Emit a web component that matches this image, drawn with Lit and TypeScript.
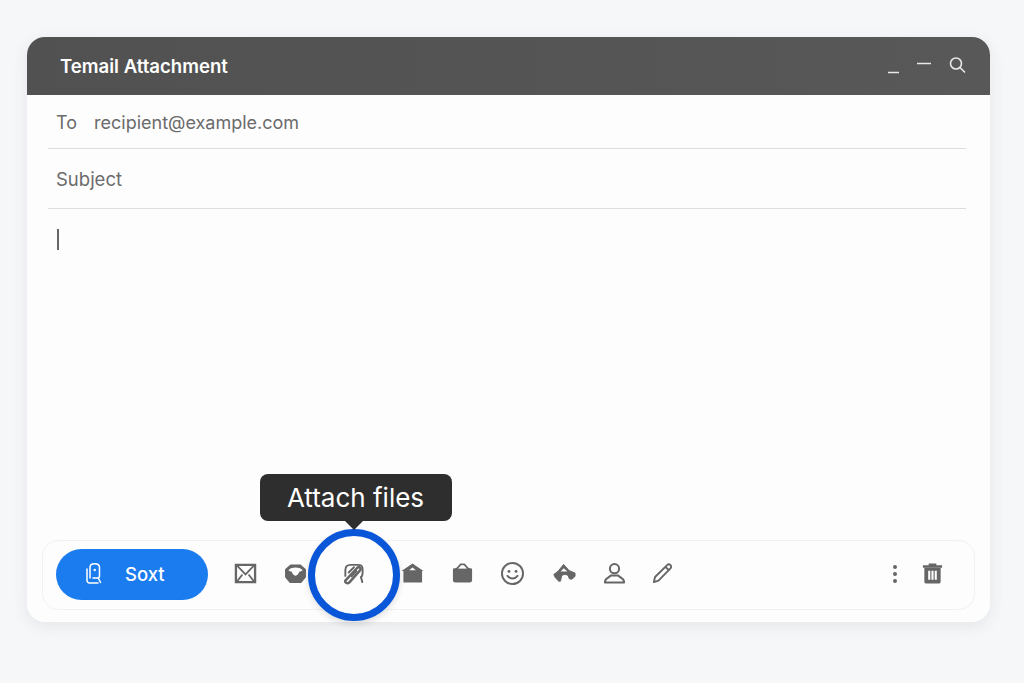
import { LitElement, css, html, svg } from "lit";
import { customElement } from "lit/decorators.js";

const icons = {
  envelope: svg`<path d="M2 3h20v18H2z" fill="none" stroke="currentColor" stroke-width="2.400"/><path d="M3 3.500l9 9.500 9-9.500M3 20.500l5.800-7.500M21 20.500l-5.800-7.500" fill="none" stroke="currentColor" stroke-width="1.800"/>`,
  shield: svg`<path d="M7 3.500h10l5 4.500v7.500l-4.500 5.500h-11L2 15.500V8z" fill="currentColor" stroke="currentColor" stroke-width="1.800" stroke-linejoin="round"/><path d="M4.500 8.500c2-2 4.500-2.800 7.500-2.800s5.500.8 7.500 2.800c-1 .8-2.500 1.300-3.600 1.600-.5 2-1.900 3.700-3.900 4.200-2-.5-3.400-2.200-3.900-4.200-1.100-.3-2.600-.8-3.600-1.600z" fill="#fdfdfd"/>`,
  clip: svg`<g fill="none" stroke="currentColor" stroke-linecap="round" stroke-linejoin="round"><path stroke-width="2.600" d="M3.500 19.500L16 6c1.900-1.800 4.500.7 2.800 2.700L7.500 21.500c-1.700 1.500-5 .1-4-2z"/><path stroke-width="2" d="M3.500 14.500V8.500C3.500 5 5.500 3 9 3h8c2.700 0 4.500 1.800 4.500 4.500v4c0 2-.6 3.500-1.700 4.700M19.700 15.500l1.500 5.500"/><path stroke-width="2" d="M7 11l5.500-5.500M10 15l5-5.500"/></g>`,
  home: svg`<path d="M2.500 9.500h19.500v11a1 1 0 0 1-1 1H3.500a1 1 0 0 1-1-1z" fill="currentColor"/><path fill-rule="evenodd" d="M.5 9.500L12 1.500l11.500 8zM8.500 8.500h7L12 5.800z" fill="currentColor"/>`,
  bag: svg`<path d="M3.500 6.500h17a1.500 1.500 0 0 1 1.500 1.500v11a2.500 2.500 0 0 1-2.500 2.500h-15A2.500 2.500 0 0 1 2 19V8a1.500 1.500 0 0 1 1.500-1.500z" fill="currentColor"/><path d="M4.500 8.500c2.500-2.500 4.500-4 5.500-6h4c1 2 3 3.500 5.500 6" fill="none" stroke="currentColor" stroke-width="2" stroke-linejoin="round"/><path d="M7.500 6.800h9L13.300 4h-2.600z" fill="#fdfdfd"/>`,
  smile: svg`<circle cx="12" cy="12" r="11" fill="none" stroke="currentColor" stroke-width="2"/><circle cx="8.300" cy="9.800" r="1.500" fill="currentColor"/><circle cx="15.700" cy="9.800" r="1.500" fill="currentColor"/><path d="M6.800 14.500c2.600 3.600 7.800 3.600 10.400 0" fill="none" stroke="currentColor" stroke-width="2" stroke-linecap="round"/>`,
  car: svg`<path d="M.8 13l4.700-3.500L11 2.500l6 6.500 6 2.500v3.500l-3.500 3-2.500-.5-1-3c-1.500-2-5.500-2-7 0L7.800 20H6l-3.500-3.500z" fill="currentColor" stroke="currentColor" stroke-linejoin="round"/><path d="M8 10l3.200-3.500L15 10z" fill="#fdfdfd"/>`,
  person: svg`<g fill="none" stroke="currentColor" stroke-width="2.100"><circle cx="12" cy="7" r="4.800"/><path d="M2 21.500c0-2.500 1-4 3-5l3.500-2.500h7l3.500 2.500c2 1 3 2.500 3 5z" stroke-linejoin="round"/></g>`,
  pencil: svg`<g fill="none" stroke="currentColor" stroke-width="2" stroke-linejoin="round"><path d="M3 21l1.200-5.300L16.800 3.200c1-1 2.500-1 3.500 0s1 2.500 0 3.500L7.800 19.500z"/><path d="M15 5l4 4"/></g>`,
  trash: svg`<path d="M2 3.500h20v2.500H2zM8 1.500h8v2H8z" fill="currentColor"/><path fill-rule="evenodd" d="M3.500 6h17v14.500a2 2 0 0 1-2 2h-13a2 2 0 0 1-2-2zM7.500 9v9.500h2.200V9zM10.900 9v9.500h2.200V9zM14.300 9v9.500h2.200V9z" fill="currentColor"/>`,
};

const before = [
  { icon: icons.envelope, width: 50 },
  { icon: icons.shield, width: 50 },
];
const after = [
  { icon: icons.home, width: 50 },
  { icon: icons.bag, width: 50 },
  { icon: icons.smile, width: 51 },
  { icon: icons.car, width: 52 },
  { icon: icons.person, width: 48 },
  { icon: icons.pencil, width: 48 },
];

@customElement("app-root")
export class AppRoot extends LitElement {
  static styles = css`
    :host {
      display: block;
      box-sizing: border-box;
      height: 683px;
      padding: 37px 34px 61px 27px;
      background: #f6f7f9;
      font-family: Inter, "Liberation Sans", sans-serif;
    }
    .card {
      height: 100%;
      display: flex;
      flex-direction: column;
      background: #fdfdfd;
      border-radius: 18px;
      box-shadow: 0 4px 16px rgba(40, 50, 70, 0.09);
    }
    .head {
      height: 58px;
      flex: none;
      display: flex;
      align-items: center;
      padding: 0 22px 0 33px;
      background: linear-gradient(90deg, #515151, #585858);
      border-radius: 18px 18px 0 0;
      color: #fff;
    }
    .title {
      flex: 1;
      font-size: 18.600px;
      font-weight: 600;
      margin-top: -1px;
    }
    .head svg {
      display: block;
      width: 80px;
      height: 24px;
      margin-top: -2px;
    }
    .field {
      flex: none;
      box-sizing: border-box;
      margin: 0 24px 0 21px;
      padding: 2px 0 0 8px;
      display: flex;
      align-items: center;
      gap: 17px;
      font-size: 18px;
      color: #6b6b6b;
      border-bottom: 1px solid #dcdddd;
    }
    .to {
      height: 54px;
    }
    .subject {
      height: 60px;
      padding-top: 0;
      font-size: 18.500px;
    }
    .body {
      flex: 1;
      padding: 20px 0 0 30px;
    }
    .caret {
      width: 2px;
      height: 21px;
      background: #666;
    }
    .bar {
      flex: none;
      height: 70px;
      box-sizing: border-box;
      margin: 0 15px 12px 15px;
      padding: 0 30px 0 13px;
      display: flex;
      align-items: center;
      border: 1px solid #f0f1f2;
      border-radius: 16px;
      color: #666;
    }
    .send {
      width: 152px;
      height: 51px;
      flex: none;
      margin: 0 12px 1px 0;
      display: flex;
      align-items: center;
      gap: 22px;
      padding: 0 0 2px 30px;
      box-sizing: border-box;
      background: #1b7cef;
      border: none;
      border-radius: 26px;
      color: #fff;
      font: 500 18.500px Inter, "Liberation Sans", sans-serif;
    }
    .send svg {
      width: 17px;
      height: 21px;
    }
    .slot {
      flex: none;
      display: flex;
      justify-content: center;
      margin-bottom: 3px;
    }
    .slot svg {
      width: 23px;
      height: 23px;
      display: block;
    }
    .attach {
      width: 67px;
      position: relative;
    }
    .attach svg {
      position: relative;
    }
    .ring {
      position: absolute;
      left: 50%;
      top: calc(50% + 1.500px);
      width: 92px;
      height: 92px;
      box-sizing: border-box;
      transform: translate(-50%, -50%);
      border: 7px solid #0a56d8;
      border-radius: 50%;
      background: #fdfdfd;
      box-shadow: 0 3px 6px rgba(0, 0, 0, 0.12);
    }
    .tip {
      position: absolute;
      left: 50%;
      bottom: 64px;
      transform: translateX(calc(-50% + 2px));
      width: 192px;
      height: 47px;
      display: flex;
      align-items: center;
      justify-content: center;
      background: #2e2e2e;
      border-radius: 8px;
      color: #fff;
      font-size: 26px;
      white-space: nowrap;
    }
    .tip::after {
      content: "";
      position: absolute;
      left: calc(50% - 2px);
      top: 100%;
      margin-left: -9px;
      border: 9px solid transparent;
      border-bottom: 0;
      border-top-color: #2e2e2e;
    }
    .spacer {
      flex: 1;
    }
    .dots {
      display: flex;
      flex-direction: column;
      gap: 3px;
      margin: 0 24px 3px 0;
    }
    .dots i {
      width: 4px;
      height: 4px;
      border-radius: 50%;
      background: #666;
    }
  `;

  private iconSlot(icon: unknown, width?: number) {
    return html`<div class="slot" style=${width ? `width:${width}px` : ""}>
      <svg viewBox="0 0 24 24">${icon}</svg>
    </div>`;
  }

  render() {
    return html`
      <div class="card">
        <div class="head">
          <div class="title">Temail Attachment</div>
          <svg viewBox="0 0 80 24" fill="none" stroke="#e8e8e8" stroke-width="1.600">
            <path d="M0 19.500h11M29 10.500h14"/>
            <circle cx="68" cy="10.500" r="5.500"/>
            <path d="M72 14.500l5 5"/>
          </svg>
        </div>
        <div class="field to"><span>To</span><span>recipient@example.com</span></div>
        <div class="field subject">Subject</div>
        <div class="body"><div class="caret"></div></div>
        <div class="bar">
          <button class="send">
            <svg viewBox="0 0 17 21" fill="none" stroke="currentColor" stroke-width="1.500" stroke-linecap="round" stroke-linejoin="round">
              <path d="M4 15V4.500C4 2 5.500.8 8.500.8S13.500 2 13.500 4.500V13a2 2 0 0 1-2 2H7"/>
              <path d="M1 6v11.500A2.500 2.500 0 0 0 3.500 20H12M12.500 15.500l2 4"/>
              <circle cx="8.700" cy="7" r="0.500"/>
            </svg>
            Soxt
          </button>
          ${before.map((i) => this.iconSlot(i.icon, i.width))}
          <div class="slot attach">
            <div class="ring"></div>
            <svg viewBox="0 0 24 24">${icons.clip}</svg>
            <div class="tip">Attach files</div>
          </div>
          ${after.map((i) => this.iconSlot(i.icon, i.width))}
          <div class="spacer"></div>
          <div class="dots"><i></i><i></i><i></i></div>
          ${this.iconSlot(icons.trash)}
        </div>
      </div>
    `;
  }
}
